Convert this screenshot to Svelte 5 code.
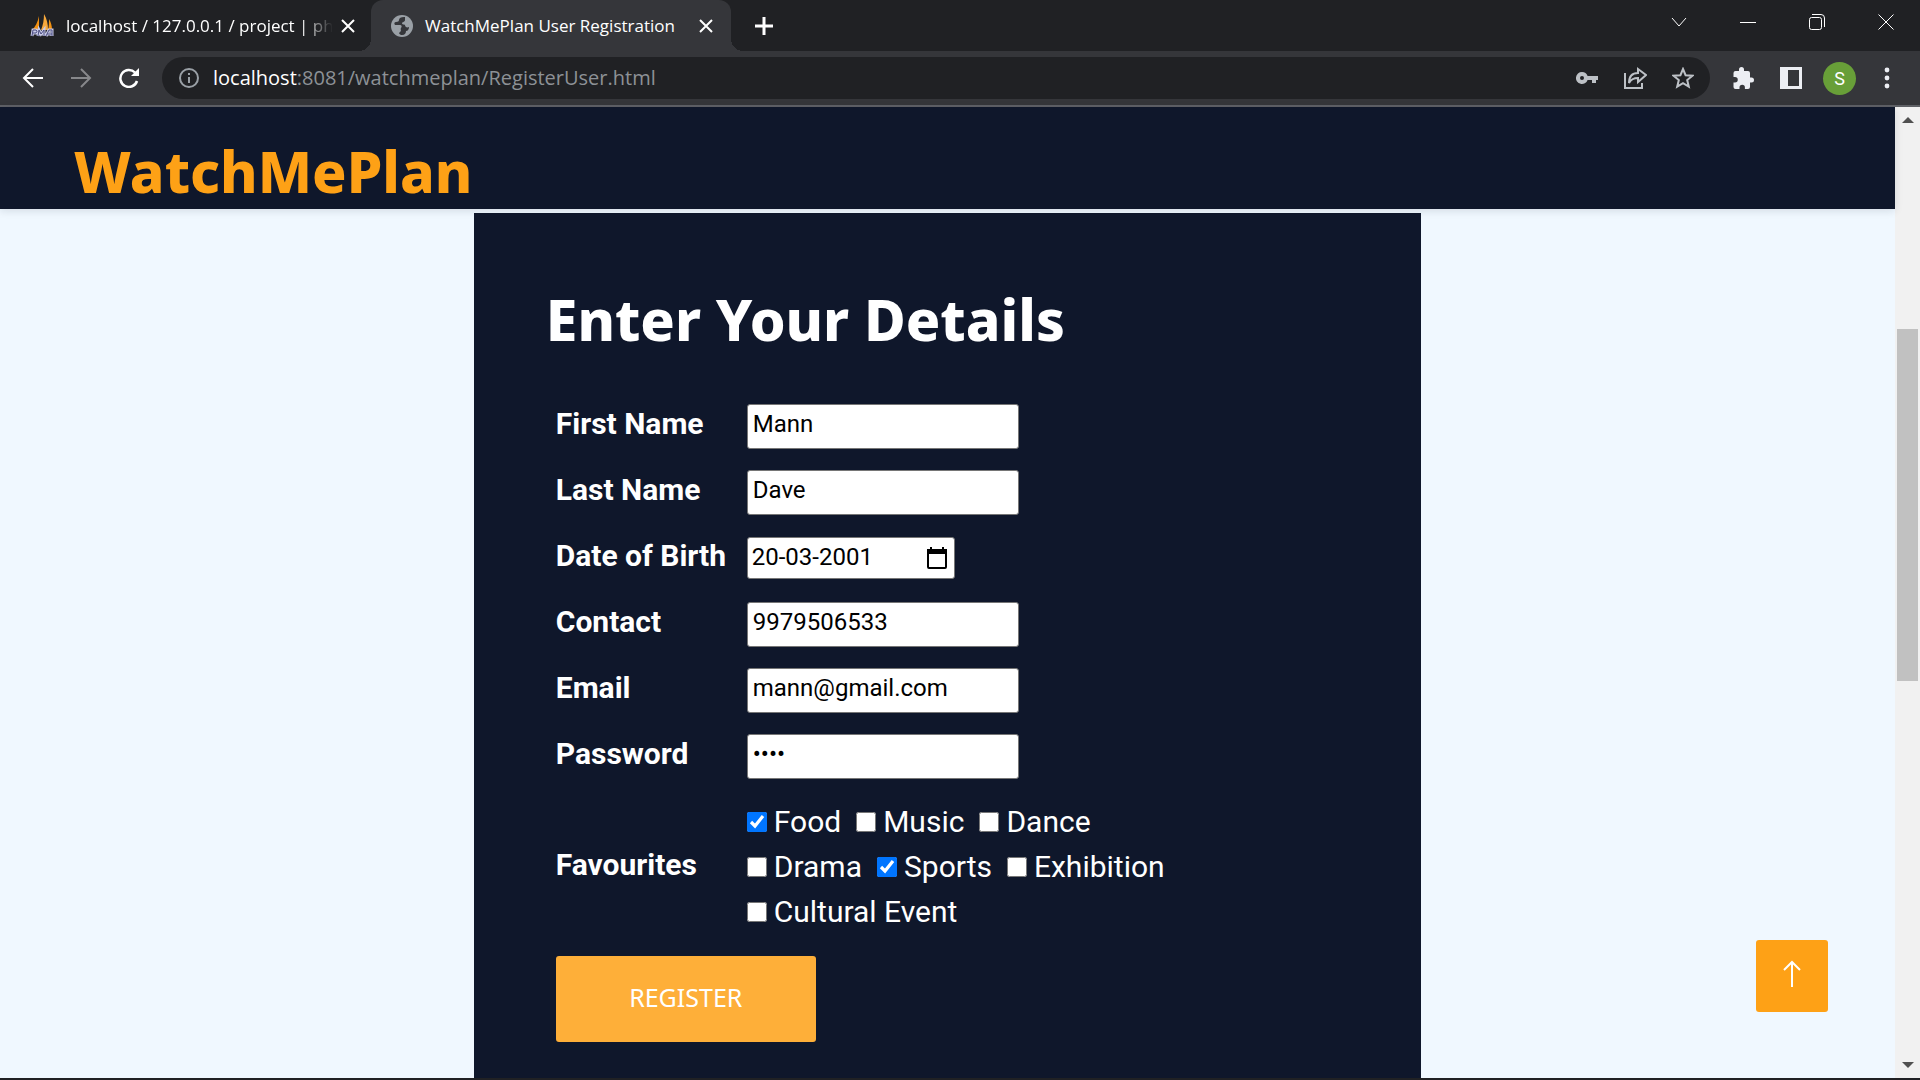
<script>
  let details = $state([
    { id: 'first', label: 'First Name', type: 'text', value: 'Mann' },
    { id: 'last', label: 'Last Name', type: 'text', value: 'Dave' },
    { id: 'dob', label: 'Date of Birth', type: 'date', value: '20-03-2001' },
    { id: 'contact', label: 'Contact', type: 'tel', value: '9979506533' },
    { id: 'email', label: 'Email', type: 'email', value: 'mann@gmail.com' },
    { id: 'password', label: 'Password', type: 'password', value: 'mann' }
  ]);

  let favourites = $state([
    [
      { name: 'Food', on: true },
      { name: 'Music', on: false },
      { name: 'Dance', on: false }
    ],
    [
      { name: 'Drama', on: false },
      { name: 'Sports', on: true },
      { name: 'Exhibition', on: false }
    ],
    [{ name: 'Cultural Event', on: false }]
  ]);
</script>

<div class="window">
  <div class="tabstrip">
    <div class="tab">
      <svg class="favicon" width="24" height="24" viewBox="0 0 24 24" aria-hidden="true">
        <path d="M9 2v14H2c3-3 6-8 7-14z" fill="#f29111" />
        <path d="M14 0c3 5 4 10 4 16h-7c2-5 3-10 3-16z" fill="#f7a83b" />
        <path d="M19 5c2 3 3 7 3 11h-4c1-4 1-7 1-11z" fill="#f29111" />
        <path
          d="M2 22l1-6h3q2 1 0 3H3M8 22l1-6 2 4 3-4v6M16 22l3-6h3v6M17 20h5"
          fill="none"
          stroke="#c9cbe8"
          stroke-width="3"
        />
        <path
          d="M2 22l1-6h3q2 1 0 3H3M8 22l1-6 2 4 3-4v6M16 22l3-6h3v6M17 20h5"
          fill="none"
          stroke="#4a4c80"
          stroke-width="1"
        />
      </svg>
      <span class="title faded">localhost / 127.0.0.1 / project | ph</span>
      <button class="icon" aria-label="Close tab">
        <svg width="14" height="14" viewBox="0 0 14 14"><path d="M1 1l12 12M13 1L1 13" class="line" /></svg>
      </button>
    </div>
    <div class="tab active">
      <svg class="globe" width="22" height="22" viewBox="0 0 22 22" aria-hidden="true">
        <circle cx="11" cy="11" r="11" fill="#9aa0a6" />
        <path
          d="M13 2c-3 0-5 1-5 3 0 1-1 2-3 2s-2 2-1 3h5c2 0 2 2 1 3s1 3-1 4 0 3 2 3c3 0 4-2 4-4 2 0 3-2 3-4-2 1-4 0-4-2-1-1-3 0-3-2 0-1 3-1 3-3V2z"
          fill="#35363a"
        />
      </svg>
      <span class="title">WatchMePlan User Registration</span>
      <button class="icon" aria-label="Close tab">
        <svg width="14" height="14" viewBox="0 0 14 14"><path d="M1 1l12 12M13 1L1 13" class="line" /></svg>
      </button>
    </div>
    <button class="icon new" aria-label="New tab">
      <svg width="18" height="18" viewBox="0 0 18 18"><path d="M9 0v18M0 9h18" class="line thick" /></svg>
    </button>
    <div class="controls">
      <button class="icon" aria-label="Search tabs">
        <svg width="16" height="16" viewBox="0 0 16 16"><path d="M1 4l7 8 7-8" class="line thin" /></svg>
      </button>
      <button class="icon" aria-label="Minimize">
        <svg width="16" height="16" viewBox="0 0 16 16"><path d="M0 8.500h16" class="line thin" /></svg>
      </button>
      <button class="icon" aria-label="Restore">
        <svg width="16" height="16" viewBox="0 0 16 16">
          <rect x="0.500" y="3.500" width="12" height="12" rx="2" class="line thin" />
          <path d="M3 .500h9a3.500 3.500 0 0 1 3.500 3.500v9" class="line thin" />
        </svg>
      </button>
      <button class="icon" aria-label="Close window">
        <svg width="16" height="16" viewBox="0 0 16 16"><path d="M.500 .500l15 15M15.500 .500l-15 15" class="line thin" /></svg>
      </button>
    </div>
  </div>

  <div class="toolbar">
    <div class="nav">
      <button class="icon" aria-label="Back">
        <svg width="22" height="20" viewBox="0 0 22 20"><path d="M21 10H2M11 1l-9 9 9 9" class="line" /></svg>
      </button>
      <button class="icon dim" aria-label="Forward">
        <svg width="22" height="20" viewBox="0 0 22 20"><path d="M1 10h19M11 1l9 9-9 9" class="line" /></svg>
      </button>
      <button class="icon" aria-label="Reload">
        <svg width="22" height="20" viewBox="0 0 22 20">
          <path d="M19 13a8.500 8.500 0 1 1-2-8.500" class="line reload" />
          <path d="M21 0v8h-8z" fill="currentColor" />
        </svg>
      </button>
    </div>
    <div class="address">
      <svg width="20" height="20" viewBox="0 0 20 20" aria-hidden="true">
        <circle cx="10" cy="10" r="9" class="line" />
        <path d="M10 9v6M10 5v2" class="line" />
      </svg>
      <span class="url"><b>localhost</b>:8081/watchmeplan/RegisterUser.html</span>
      <button class="icon" aria-label="Saved passwords">
        <svg width="22" height="22" viewBox="0 0 22 22">
          <path
            fill-rule="evenodd"
            d="M6 5a6 6 0 0 1 5.600 4H22v4h-2v3h-4v-3h-4.400A6 6 0 1 1 6 5zm0 4a2 2 0 1 0 0 4 2 2 0 0 0 0-4z"
            fill="currentColor"
          />
        </svg>
      </button>
      <button class="icon" aria-label="Share">
        <svg width="24" height="22" viewBox="0 0 24 22">
          <path d="M2 6v15h17v-5" class="line" />
          <path d="M15 2l8 6-8 7v-4c-4 0-7 1-9 5 0-6 3-10 9-10z" class="line" />
        </svg>
      </button>
      <button class="icon" aria-label="Bookmark">
        <svg width="22" height="22" viewBox="0 0 22 22">
          <path d="M11 2l2.600 6.200 6.800.500-5.200 4.400 1.600 6.600L11 16.200l-5.800 3.500 1.600-6.600L1.600 8.700l6.800-.500z" class="line" />
        </svg>
      </button>
    </div>
    <div class="actions">
      <button class="icon" aria-label="Extensions">
        <svg width="22" height="22" viewBox="0 0 22 22">
          <path
            d="M18.500 10.500H17V6a2 2 0 0 0-2-2h-4V2.500a2.500 2.500 0 0 0-5 0V4H2.500a2 2 0 0 0-2 2v4H2a2.700 2.700 0 0 1 0 5.500H.500V20a2 2 0 0 0 2 2h4v-1.500a2.700 2.700 0 0 1 5.400 0V22H15a2 2 0 0 0 2-2v-4.500h1.500a2.500 2.500 0 0 0 0-5z"
            fill="currentColor"
          />
        </svg>
      </button>
      <button class="icon" aria-label="Side panel">
        <svg width="22" height="22" viewBox="0 0 22 22">
          <path fill-rule="evenodd" d="M0 0h22v22H0zM8 3v16h11V3z" fill="currentColor" />
        </svg>
      </button>
      <button class="avatar" aria-label="Profile">S</button>
      <button class="icon" aria-label="Menu">
        <svg width="6" height="22" viewBox="0 0 6 22">
          <g fill="currentColor"><circle cx="3" cy="3" r="2.400" /><circle cx="3" cy="11" r="2.400" /><circle cx="3" cy="19" r="2.400" /></g>
        </svg>
      </button>
    </div>
  </div>

  <div class="viewport">
    <div class="page">
      <header><a class="brand" href="#home">WatchMePlan</a></header>
      <main>
        <h1>Enter Your Details</h1>
        <form>
          {#each details as field (field.id)}
            <label class="name" for={field.id}>{field.label}</label>
            {#if field.type === 'date'}
              <div class="date">
                <input id={field.id} type="text" bind:value={field.value} />
                <button type="button" class="icon" aria-label="Pick a date">
                  <svg width="20" height="22" viewBox="0 0 20 22">
                    <path d="M1 3h18v17a1 1 0 0 1-1 1H2a1 1 0 0 1-1-1z" class="line" />
                    <path d="M0 2h20v5H0zM3 0h2v3H3zM15 0h2v3h-2z" fill="currentColor" />
                  </svg>
                </button>
              </div>
            {:else}
              <input id={field.id} class="field" type={field.type} bind:value={field.value} />
            {/if}
          {/each}
          <span class="name" id="favourites">Favourites</span>
          <div class="choices" role="group" aria-labelledby="favourites">
            {#each favourites as row}
              <div class="line-of-choices">
                {#each row as item}
                  <label><input type="checkbox" bind:checked={item.on} />{item.name}</label>
                {/each}
              </div>
            {/each}
          </div>
          <button class="register" type="button">REGISTER</button>
        </form>
      </main>
      <a class="to-top" href="#top" aria-label="Back to top">
        <svg width="20" height="28" viewBox="0 0 20 28"><path d="M10 27V2M2 10l8-8 8 8" class="line" /></svg>
      </a>
    </div>
    <div class="scrollbar" aria-hidden="true">
      <svg width="12" height="6" viewBox="0 0 12 6"><path d="M0 6l6-6 6 6z" fill="#505050" /></svg>
      <div class="track"><div class="thumb"></div></div>
      <svg width="12" height="6" viewBox="0 0 12 6"><path d="M0 0l6 6 6-6z" fill="#505050" /></svg>
    </div>
  </div>
</div>

<style>
  :global(body) {
    margin: 0;
  }
  .window {
    display: flex;
    flex-direction: column;
    min-height: 100vh;
    box-sizing: border-box;
    border-bottom: 2px solid #202124;
    background: #202124;
    font-family: 'Open Sans', 'Noto Sans', sans-serif;
    color: #fff;
  }
  svg {
    display: block;
    flex: none;
  }
  .line {
    fill: none;
    stroke: currentColor;
    stroke-width: 2;
  }
  .thick {
    stroke-width: 3;
  }
  .reload {
    stroke-width: 2.5;
  }
  .thin {
    stroke-width: 1;
  }
  button {
    font: inherit;
    border: 0;
    padding: 0;
    cursor: pointer;
  }
  .icon {
    display: flex;
    flex: none;
    background: none;
    color: inherit;
  }

  .tabstrip {
    display: flex;
    height: 51px;
    font-size: 17px;
    line-height: 24px;
  }
  .tab {
    display: flex;
    align-items: center;
    box-sizing: border-box;
    width: 371px;
    padding: 0 16px 0 30px;
  }
  .tab .title {
    flex: 1;
    margin-left: 12px;
    white-space: nowrap;
  }
  .tab .faded {
    min-width: 0;
    margin-right: 8px;
    mask-image: linear-gradient(to right, #000 88%, transparent);
  }
  .tab.active {
    position: relative;
    width: 360px;
    padding: 0 18px 0 20px;
    background: #35363a;
    border-radius: 12px 12px 0 0;
  }
  .active::before,
  .active::after {
    content: '';
    position: absolute;
    bottom: 0;
    width: 12px;
    height: 12px;
  }
  .active::before {
    right: 100%;
    background: radial-gradient(circle at 0 0, transparent 12px, #35363a 12px);
  }
  .active::after {
    left: 100%;
    background: radial-gradient(circle at 100% 0, transparent 12px, #35363a 12px);
  }
  .new {
    align-items: center;
    margin-left: 24px;
  }
  .controls {
    display: flex;
    align-items: center;
    gap: 53px;
    height: 43px;
    margin-left: auto;
    padding-right: 26px;
  }

  .toolbar {
    display: flex;
    align-items: center;
    height: 54px;
    border-bottom: 2px solid #5f6166;
    background: #35363a;
  }
  .nav {
    display: flex;
    gap: 26px;
    padding: 0 22px;
  }
  .dim {
    color: #87888b;
  }
  .address {
    display: flex;
    flex: 1;
    align-items: center;
    gap: 25px;
    height: 42px;
    padding: 0 16px 0 17px;
    border-radius: 21px;
    background: #202124;
    color: #bdc1c6;
  }
  .address > svg {
    color: #9aa0a6;
  }
  .url {
    flex: 1;
    margin-left: -11px;
    font-size: 20px;
    line-height: 28px;
    color: #8d9196;
  }
  .url b {
    font-weight: 400;
    color: #fff;
  }
  .actions {
    display: flex;
    align-items: center;
    gap: 25px;
    padding: 0 30px 0 23px;
    color: #eceef3;
  }
  .avatar {
    width: 33px;
    height: 33px;
    margin: 0 3px 0 -4px;
    border-radius: 50%;
    background: #689f38;
    color: #fff;
    font-family: Roboto, sans-serif;
    font-size: 18px;
  }

  .viewport {
    display: flex;
    flex: 1;
  }
  .page {
    position: relative;
    display: flex;
    flex: 1;
    flex-direction: column;
    background: #f0f8ff;
  }
  header {
    display: flex;
    height: 102px;
    margin-bottom: 4px;
    padding-left: 74px;
    background: #0f172b;
    box-shadow: 0 2px 8px rgba(15, 23, 43, 0.12);
  }
  .brand {
    padding-top: 22px;
    color: #fea116;
    font-size: 57px;
    font-weight: 800;
    line-height: 84px;
    text-decoration: none;
    font-family: 'Noto Sans', sans-serif;
  }
  main {
    flex: 1;
    box-sizing: border-box;
    width: 50%;
    margin: 0 auto;
    padding: 64px 72px 36px;
    background: #0f172b;
    font-family: Roboto, sans-serif;
  }
  h1 {
    margin: 0 0 42px;
    font-family: 'Noto Sans', sans-serif;
    font-size: 57px;
    font-weight: 800;
    line-height: 84px;
    white-space: nowrap;
  }
  form {
    display: grid;
    grid-template-columns: 191px 1fr;
    grid-auto-rows: minmax(46px, auto);
    gap: 20px 0;
    align-items: center;
    padding-left: 10px;
    font-size: 30px;
    line-height: 45px;
  }
  .name {
    padding-bottom: 4px;
    font-weight: 700;
    line-height: 42px;
  }
  .field,
  .date {
    box-sizing: border-box;
    width: 272px;
    height: 45px;
    padding: 0 5px 4px;
    border: 1px solid #767676;
    border-radius: 3px;
    background: #fff;
    color: #000;
    font-family: Roboto, sans-serif;
    font-size: 24px;
  }
  .date {
    display: flex;
    align-items: center;
    width: 208px;
    height: 42px;
    padding: 0 7px 0 4px;
  }
  .date input {
    flex: 1;
    box-sizing: border-box;
    min-width: 0;
    height: 38px;
    padding: 0 0 2px;
    border: 0;
    outline: 0;
    background: none;
    font: inherit;
    line-height: 32px;
    color: inherit;
  }
  .line-of-choices {
    display: flex;
    gap: 15px;
    white-space: nowrap;
  }
  .choices label {
    display: flex;
    align-items: center;
    gap: 7px;
  }
  .choices input {
    width: 20px;
    height: 20px;
    margin: 0;
  }
  .register {
    grid-column: 1 / -1;
    justify-self: start;
    width: 260px;
    height: 86px;
    margin-top: 2px;
    padding-bottom: 3px;
    border-radius: 3px;
    background: #feaf39;
    color: #fff;
    font-family: 'Noto Sans', sans-serif;
    font-size: 25px;
  }
  .to-top {
    position: absolute;
    right: 67px;
    bottom: 66px;
    display: flex;
    align-items: center;
    justify-content: center;
    box-sizing: border-box;
    width: 72px;
    height: 72px;
    padding-bottom: 4px;
    border-radius: 3px;
    background: #fea116;
    color: #fff;
  }
  .scrollbar {
    display: flex;
    flex-direction: column;
    align-items: center;
    box-sizing: border-box;
    width: 25px;
    padding: 10px 0;
    background: #f1f1f1;
  }
  .track {
    display: flex;
    flex: 1;
    flex-direction: column;
    padding-top: 206px;
  }
  .thumb {
    width: 21px;
    height: 48%;
    background: #c1c1c1;
  }
</style>
